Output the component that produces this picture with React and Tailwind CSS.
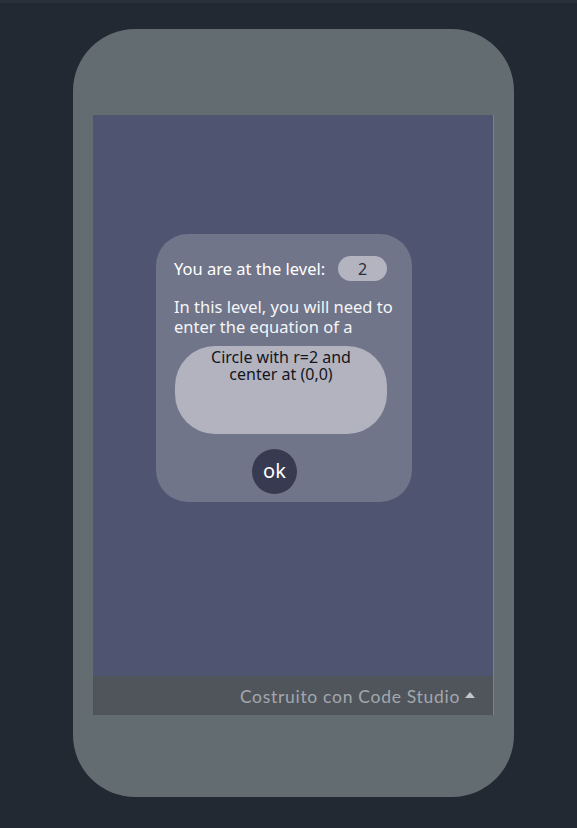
export default function App() {
  return (
    <div className="min-h-[828px] w-full bg-[#222933] border-t-[3px] border-[#29303a] pt-[26px]">
      <div className="ml-[73px] w-[441px] h-[768px] rounded-[62px] bg-[#636c71] pt-[86px] pl-[20px]">
        <div className="w-[401px] h-[600px] bg-[#4f5470] border-r border-[#7a7f95] flex flex-col">
          <div className="flex-1 pt-[119px] pl-[63px]">
            <div className="w-[256px] h-[268px] rounded-[32px] bg-[#707589] px-[18px] pt-[22px] font-['Noto_Sans',sans-serif] text-white">
              <div className="flex items-center">
                <span className="text-[16.5px] leading-[20px] w-[164px] whitespace-nowrap">You are at the level:</span>
                <span className="w-[49px] h-[25px] rounded-full bg-[#b3b4c0] text-[#2a2d3a] text-[16px] flex items-center justify-center">2</span>
              </div>
              <p className="mt-[16px] text-[16.5px] leading-[20px] text-[#f4f5f8] whitespace-nowrap">
                In this level, you will need to
                <br />
                enter the equation of a
              </p>
              <div className="mt-[9px] ml-px w-[212px] h-[88px] rounded-[40px] bg-[#b2b3bf] text-[#15161c] text-[16px] leading-[17px] text-center pt-[3px] px-[10px]">
                Circle with r=2 and
                <br />
                center at (0,0)
              </div>
              <div className="flex mt-[15px] pl-[78px]">
                <button className="w-[45px] h-[45px] rounded-full bg-[#373a50] text-white text-[20px] leading-none flex items-center justify-center pb-[2px]">
                  ok
                </button>
              </div>
            </div>
          </div>
          <div className="h-[39px] bg-[#50555c] flex items-center justify-end pr-[17px] pt-[3px] font-['Lato',sans-serif] text-[17.5px] tracking-[0.7px] text-[#a3a7ad]">
            <span>Costruito con Code Studio</span>
            <svg width="12" height="9" viewBox="0 0 12 9" className="ml-[4px] mb-[3px]">
              <path d="M6 1 L11 7 L1 7 Z" fill="#c2c5ca" />
            </svg>
          </div>
        </div>
      </div>
    </div>
  );
}
